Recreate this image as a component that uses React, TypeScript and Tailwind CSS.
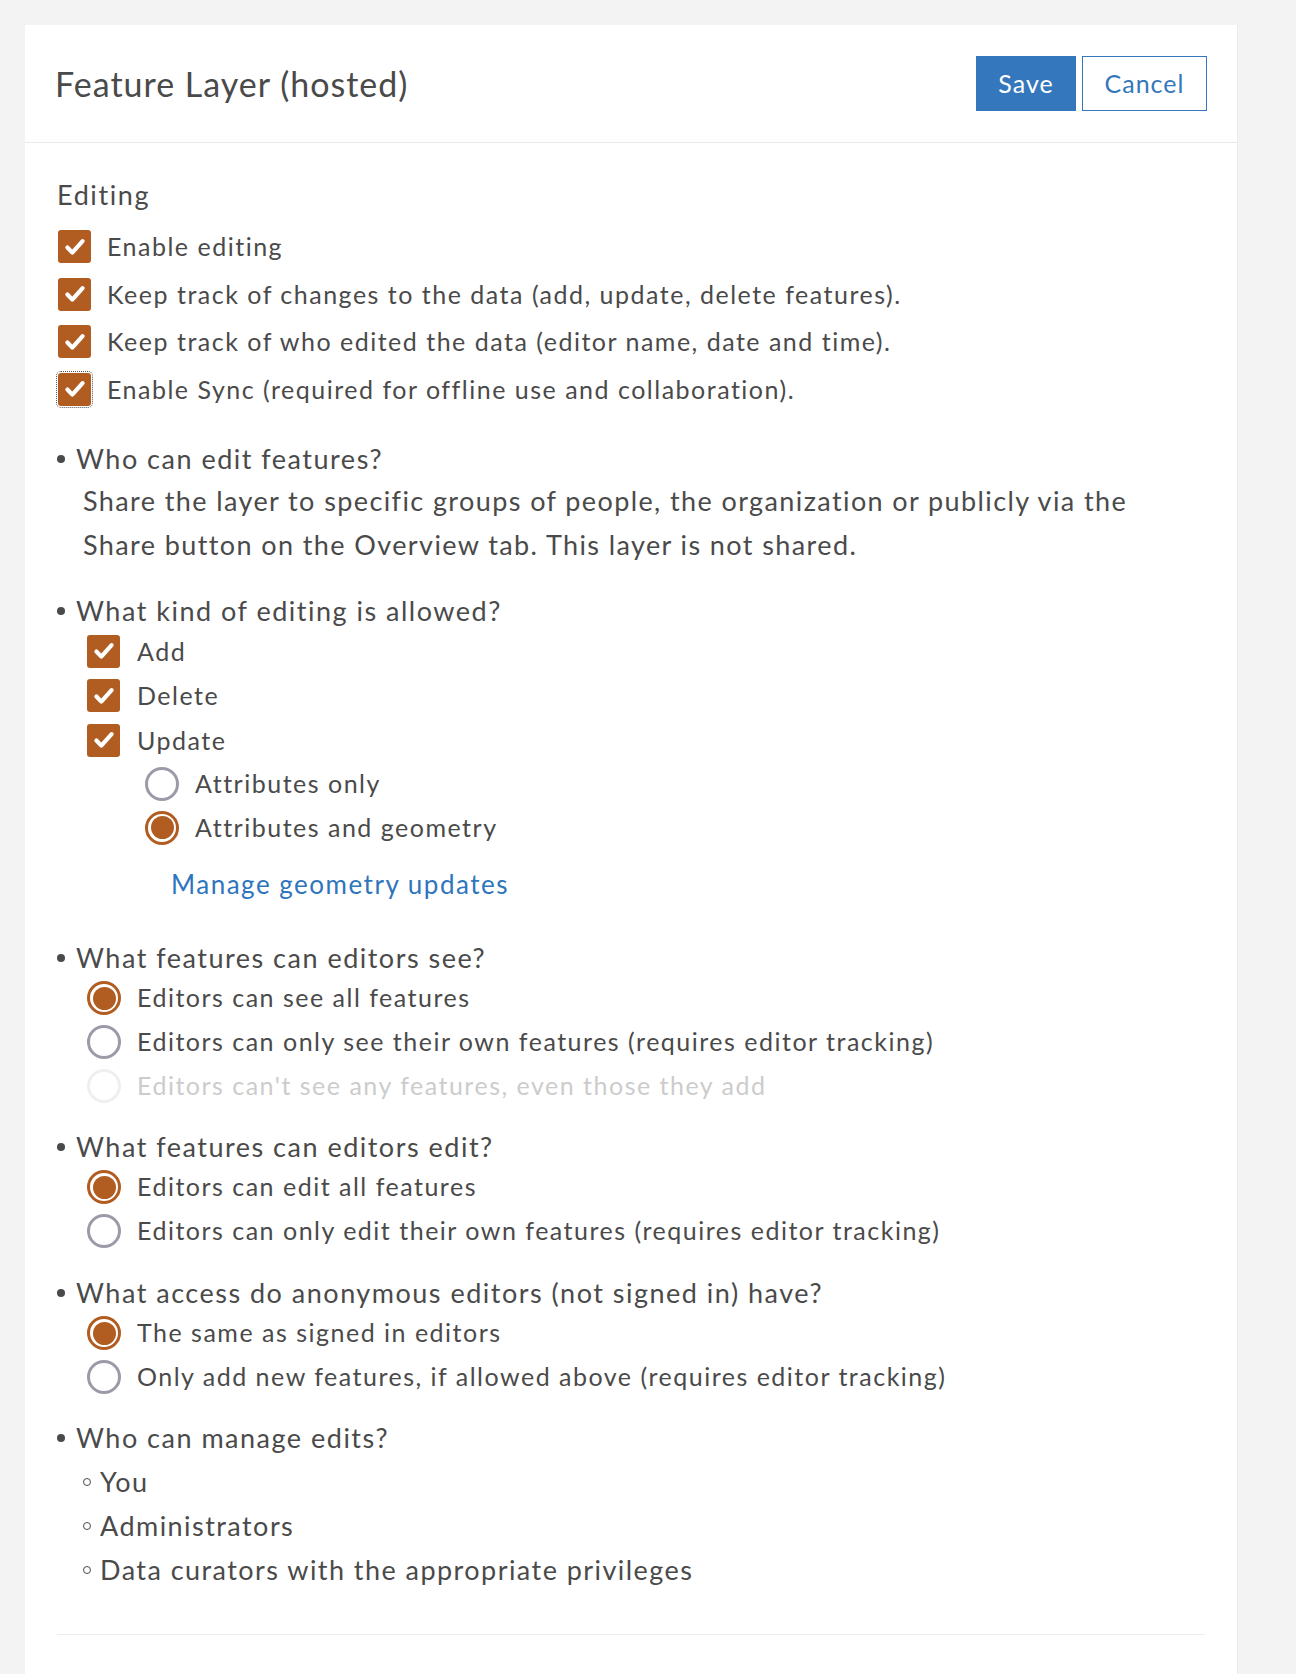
import React from 'react';

const FONT = { fontFamily: 'Lato, "Noto Sans", sans-serif' };

const Check: React.FC<{ focused?: boolean }> = ({ focused }) => (
  <span
    className={`flex h-[33px] w-[33px] shrink-0 items-center justify-center rounded-[3px] bg-[#b15d22] ${
      focused ? 'outline outline-1 outline-offset-1 outline-dotted outline-[#555]' : ''
    }`}
  >
    <svg viewBox="0 0 24 24" className="h-[28px] w-[28px]" fill="none">
      <path d="M5.5 12.5l4.2 4.3L18.5 7" stroke="#fff" strokeWidth="3.6" strokeLinecap="round" strokeLinejoin="round" />
    </svg>
  </span>
);

const Radio: React.FC<{ on?: boolean; disabled?: boolean }> = ({ on, disabled }) => {
  if (on) {
    return (
      <span className="flex h-[34px] w-[34px] shrink-0 items-center justify-center rounded-full border-[3px] border-[#b15d22] bg-white">
        <span className="h-[23px] w-[23px] rounded-full bg-[#b15d22]" />
      </span>
    );
  }
  return (
    <span
      className={`h-[34px] w-[34px] shrink-0 rounded-full border-[3px] bg-white ${
        disabled ? 'border-[#efefef]' : 'border-[#9b9aa8]'
      }`}
    />
  );
};

const CheckRow: React.FC<{ label: string; h: string; gap: string; focused?: boolean }> = ({ label, h, gap, focused }) => (
  <div className={`flex items-center ${h} ${gap}`}>
    <Check focused={focused} />
    <span>{label}</span>
  </div>
);

const RadioRow: React.FC<{ label: string; on?: boolean; disabled?: boolean; h?: string }> = ({
  label,
  on,
  disabled,
  h = 'h-[44px]',
}) => (
  <div className={`flex items-center gap-[16px] ${h}`}>
    <Radio on={on} disabled={disabled} />
    <span className={disabled ? 'text-[#cccccc]' : ''}>{label}</span>
  </div>
);

const Question: React.FC<{ text: string; className?: string }> = ({ text, className = '' }) => (
  <div className={`flex h-[36px] items-center text-[27px] tracking-[1.5px] ${className}`}>
    <span className="mr-[11px] h-[8px] w-[8px] shrink-0 rounded-full bg-[#4a4a4a]" />
    <span>{text}</span>
  </div>
);

const SubItem: React.FC<{ text: string }> = ({ text }) => (
  <div className="flex h-[44px] items-center pl-[26px] text-[27px] tracking-[1.45px]">
    <span className="mr-[9px] h-[8px] w-[8px] shrink-0 rounded-full border border-[#4a4a4a]" />
    <span>{text}</span>
  </div>
);

export default function App() {
  return (
    <div className="flex h-[1674px] overflow-hidden bg-[#f3f3f3] pt-[25px] pl-[25px] pr-[58px]" style={FONT}>
      <div className="flex-1 border-r border-[#ebebeb] bg-white text-[25px] tracking-[1.5px] text-[#4a4a4a]">
        {/* header */}
        <div className="flex h-[118px] items-center justify-between border-b border-[#e9e9e9] px-[30px]">
          <h1 className="text-[34px] font-normal tracking-[1px] text-[#4a4a4a]">Feature Layer (hosted)</h1>
          <div className="flex gap-[6px] tracking-[1px]">
            <button className="h-[55px] w-[100px] bg-[#3477bc] text-[25px] text-white">Save</button>
            <button className="h-[55px] w-[125px] border border-[#3477bc] bg-white text-[25px] text-[#3477bc]">
              Cancel
            </button>
          </div>
        </div>

        {/* body */}
        <div className="px-[32px] pt-[32px]">
          <div className="flex h-[40px] items-center text-[27px] tracking-[1.6px]">Editing</div>
          <div className="mt-[8px] pl-[1px]">
            <CheckRow h="h-[47.5px]" gap="gap-[16px]" label="Enable editing" />
            <CheckRow h="h-[47.5px]" gap="gap-[16px]" label="Keep track of changes to the data (add, update, delete features)." />
            <CheckRow h="h-[47.5px]" gap="gap-[16px]" label="Keep track of who edited the data (editor name, date and time)." />
            <CheckRow focused h="h-[47.5px]" gap="gap-[16px]" label="Enable Sync (required for offline use and collaboration)." />
          </div>

          <Question className="mt-[28px]" text="Who can edit features?" />
          <p className="mt-[2px] pl-[26px] text-[27px] leading-[44px] tracking-[1.4px]">
            Share the layer to specific groups of people, the organization or publicly via the
            <br />
            Share button on the Overview tab. This layer is not shared.
          </p>

          <Question className="mt-[26px]" text="What kind of editing is allowed?" />
          <div className="pl-[30px]">
            <CheckRow h="h-[44.5px]" gap="gap-[17px]" label="Add" />
            <CheckRow h="h-[44.5px]" gap="gap-[17px]" label="Delete" />
            <CheckRow h="h-[44.5px]" gap="gap-[17px]" label="Update" />
            <div className="pl-[58px]">
              <RadioRow h="h-[43px]" label="Attributes only" />
              <RadioRow h="h-[44.5px]" on label="Attributes and geometry" />
            </div>
            <a className="mt-[12px] flex h-[44px] items-center pl-[84px] text-[26px] text-[#2f75bd]" href="#">
              Manage geometry updates
            </a>
          </div>

          <Question className="mt-[34px]" text="What features can editors see?" />
          <div className="pl-[30px]">
            <RadioRow on label="Editors can see all features" />
            <RadioRow label="Editors can only see their own features (requires editor tracking)" />
            <RadioRow disabled label="Editors can't see any features, even those they add" />
          </div>

          <Question className="mt-[21px]" text="What features can editors edit?" />
          <div className="pl-[30px]">
            <RadioRow on label="Editors can edit all features" />
            <RadioRow label="Editors can only edit their own features (requires editor tracking)" />
          </div>

          <Question className="mt-[22px]" text="What access do anonymous editors (not signed in) have?" />
          <div className="pl-[30px]">
            <RadioRow on label="The same as signed in editors" />
            <RadioRow label="Only add new features, if allowed above (requires editor tracking)" />
          </div>

          <Question className="mt-[21px]" text="Who can manage edits?" />
          <div className="mt-[4px]">
            <SubItem text="You" />
            <SubItem text="Administrators" />
            <SubItem text="Data curators with the appropriate privileges" />
          </div>

          <div className="mt-[42px] border-t border-[#ececec]" />
        </div>
      </div>
    </div>
  );
}
